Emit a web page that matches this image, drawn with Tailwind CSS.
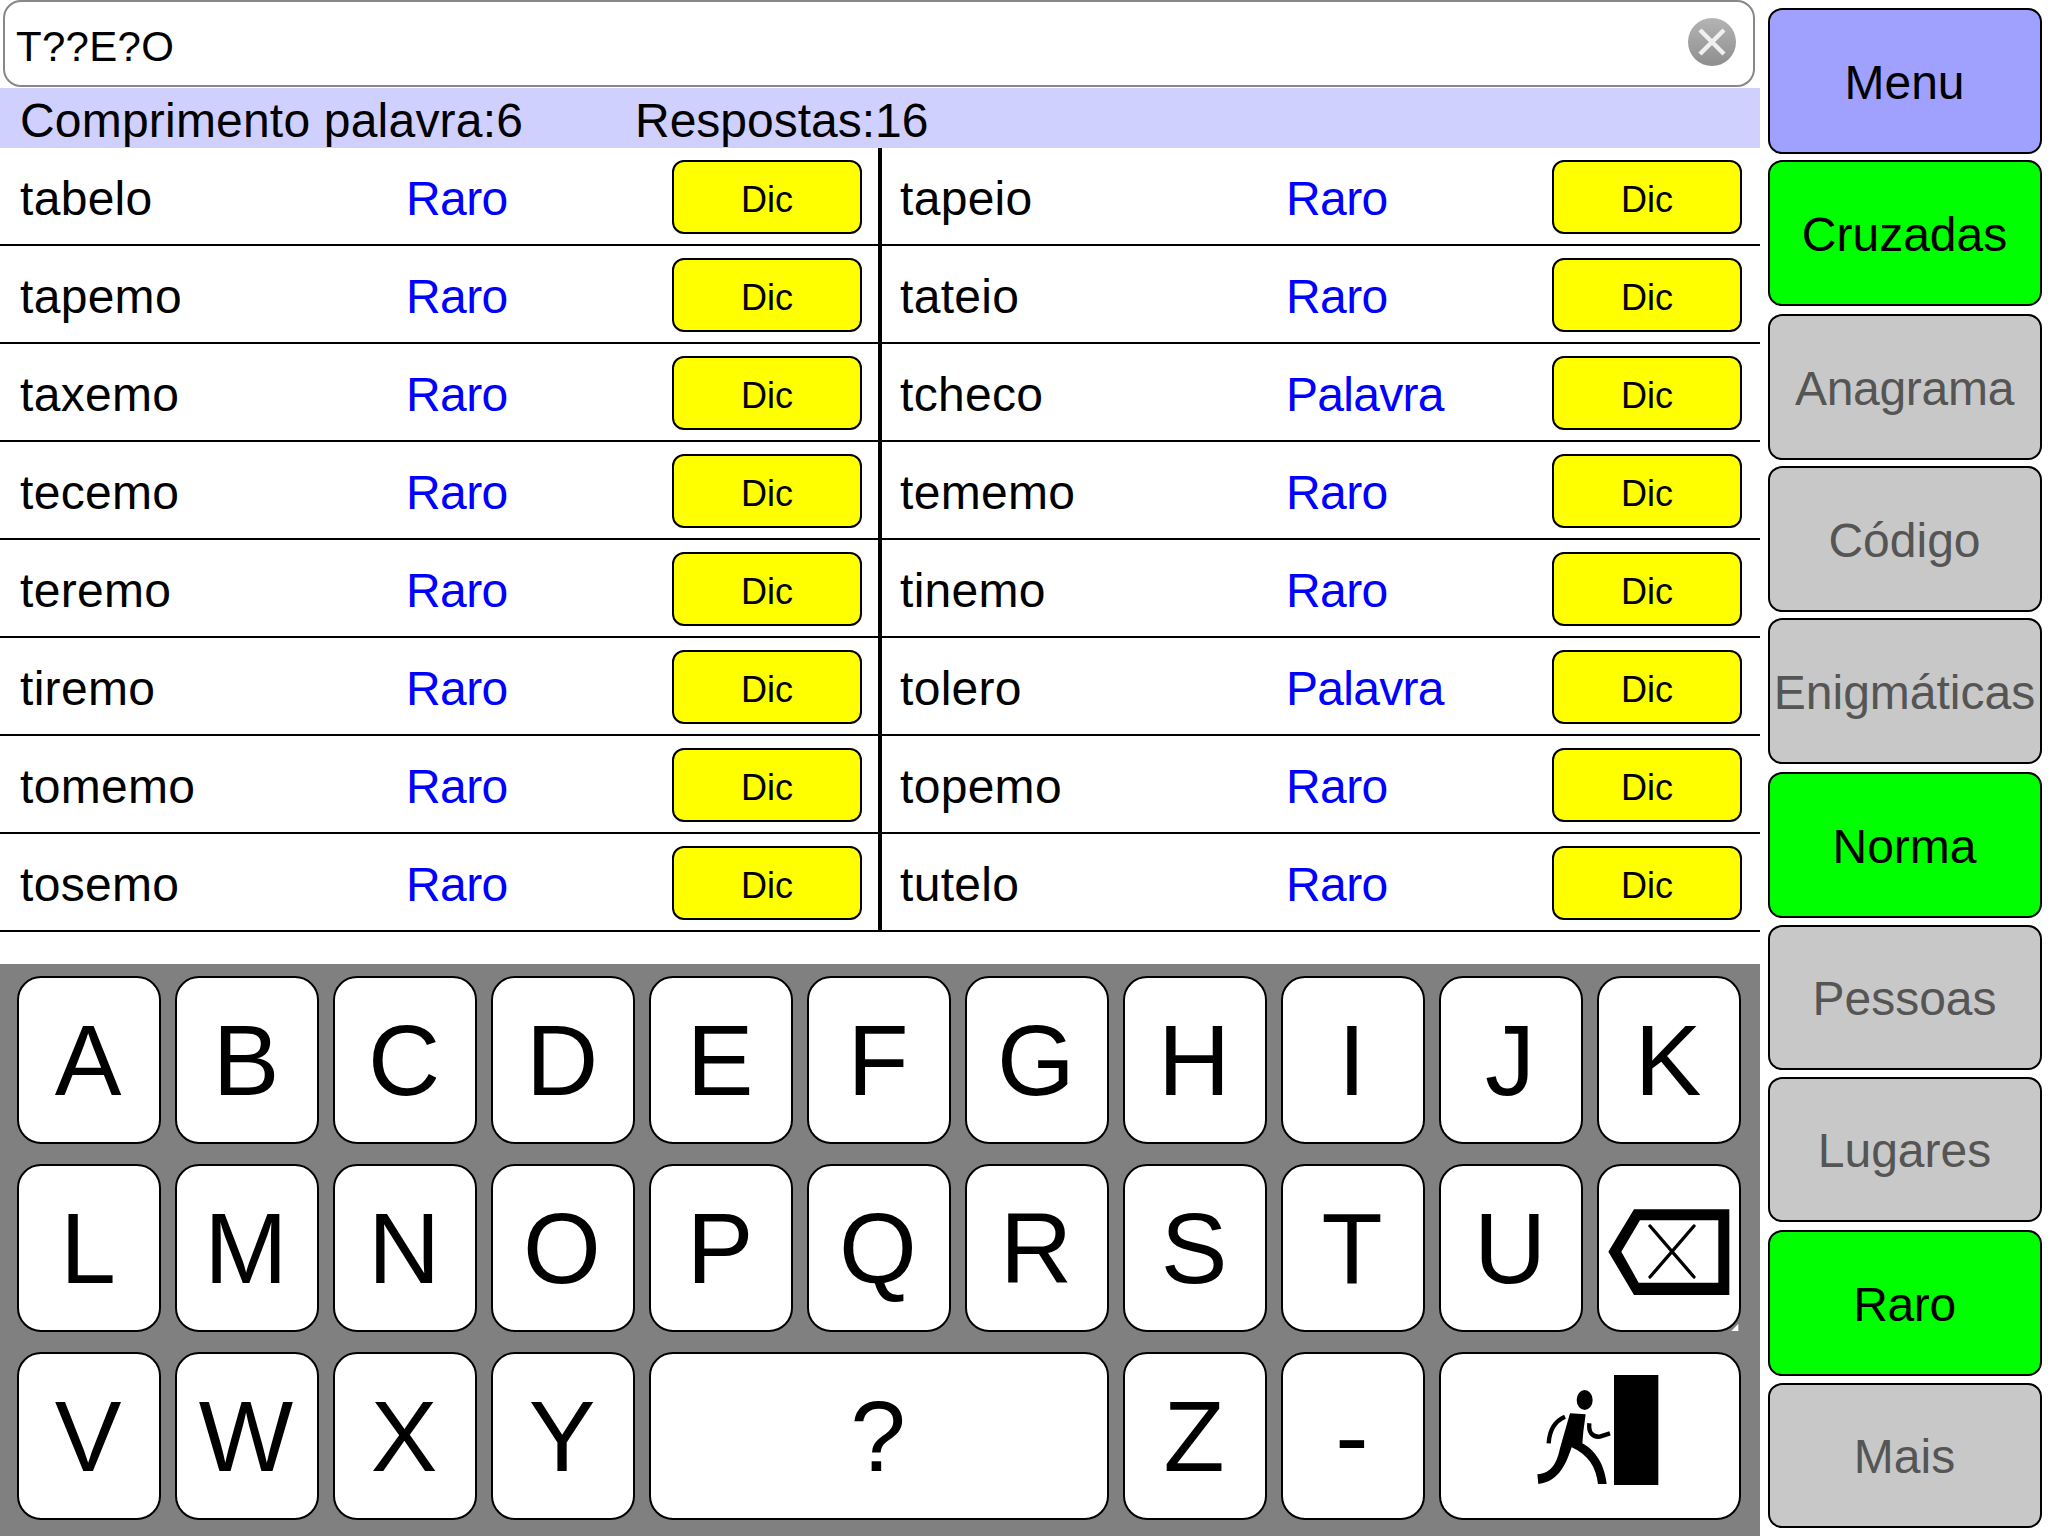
<!DOCTYPE html>
<html lang="pt">
<head>
<meta charset="utf-8">
<title>Cruzadas</title>
<script src="https://cdn.jsdelivr.net/npm/@tailwindcss/browser@4"></script>
</head>
<body class="bg-white">
<div class="w-[2048px] h-[1536px] flex overflow-hidden bg-white text-black font-['Liberation_Sans',Arial,sans-serif]">
  <div class="w-[1760px] flex flex-col">
    <div class="h-[88px] pl-[3px] pr-[5px]">
      <div class="h-[87px] border-2 border-[#888888] rounded-[18px] pl-[11px] pr-[16px] flex items-center justify-between bg-white">
        <span class="text-[42px] leading-none pt-[7px] tracking-[0.3px]">T??E?O</span>
        <svg width="50" height="50" viewBox="0 0 50 50" class="mt-[-3px]">
          <defs>
            <linearGradient id="cg" x1="0" y1="0" x2="0" y2="1"><stop offset="0" stop-color="#b4b4b4"/><stop offset="1" stop-color="#8e8e8e"/></linearGradient>
            <filter id="soft"><feGaussianBlur stdDeviation="0.7"/></filter>
          </defs>
          <g filter="url(#soft)">
            <circle cx="25" cy="25" r="24" fill="url(#cg)"/>
            <path d="M13 13 L37 37 M37 13 L13 37" stroke="#f0f0f0" stroke-width="4.5" fill="none"/>
          </g>
        </svg>
      </div>
    </div>
    <div class="h-[60px] bg-[#d0d0ff] pl-[20px] flex items-center text-[48px] leading-none">
      <span class="w-[615px] pt-[6px] tracking-[0.2px]">Comprimento palavra:6</span>
      <span class="pt-[6px]">Respostas:16</span>
    </div>
    <div class="h-[784px] flex">
      <div class="w-[878px] flex flex-col">
        <div class="h-[98px] border-b-2 border-black pl-[20px] flex items-center text-[48px]"><span class="w-[386px] pt-[6px] tracking-[0.3px]">tabelo</span><span class="w-[266px] pt-[6px] tracking-[-0.6px] text-[#0000ff]">Raro</span><div class="mt-[2px] pt-[5px] w-[190px] h-[74px] bg-[#ffff00] border-2 border-black rounded-[12px] flex items-center justify-center text-[36px]">Dic</div></div>
        <div class="h-[98px] border-b-2 border-black pl-[20px] flex items-center text-[48px]"><span class="w-[386px] pt-[6px] tracking-[0.3px]">tapemo</span><span class="w-[266px] pt-[6px] tracking-[-0.6px] text-[#0000ff]">Raro</span><div class="mt-[2px] pt-[5px] w-[190px] h-[74px] bg-[#ffff00] border-2 border-black rounded-[12px] flex items-center justify-center text-[36px]">Dic</div></div>
        <div class="h-[98px] border-b-2 border-black pl-[20px] flex items-center text-[48px]"><span class="w-[386px] pt-[6px] tracking-[0.3px]">taxemo</span><span class="w-[266px] pt-[6px] tracking-[-0.6px] text-[#0000ff]">Raro</span><div class="mt-[2px] pt-[5px] w-[190px] h-[74px] bg-[#ffff00] border-2 border-black rounded-[12px] flex items-center justify-center text-[36px]">Dic</div></div>
        <div class="h-[98px] border-b-2 border-black pl-[20px] flex items-center text-[48px]"><span class="w-[386px] pt-[6px] tracking-[0.3px]">tecemo</span><span class="w-[266px] pt-[6px] tracking-[-0.6px] text-[#0000ff]">Raro</span><div class="mt-[2px] pt-[5px] w-[190px] h-[74px] bg-[#ffff00] border-2 border-black rounded-[12px] flex items-center justify-center text-[36px]">Dic</div></div>
        <div class="h-[98px] border-b-2 border-black pl-[20px] flex items-center text-[48px]"><span class="w-[386px] pt-[6px] tracking-[0.3px]">teremo</span><span class="w-[266px] pt-[6px] tracking-[-0.6px] text-[#0000ff]">Raro</span><div class="mt-[2px] pt-[5px] w-[190px] h-[74px] bg-[#ffff00] border-2 border-black rounded-[12px] flex items-center justify-center text-[36px]">Dic</div></div>
        <div class="h-[98px] border-b-2 border-black pl-[20px] flex items-center text-[48px]"><span class="w-[386px] pt-[6px] tracking-[0.3px]">tiremo</span><span class="w-[266px] pt-[6px] tracking-[-0.6px] text-[#0000ff]">Raro</span><div class="mt-[2px] pt-[5px] w-[190px] h-[74px] bg-[#ffff00] border-2 border-black rounded-[12px] flex items-center justify-center text-[36px]">Dic</div></div>
        <div class="h-[98px] border-b-2 border-black pl-[20px] flex items-center text-[48px]"><span class="w-[386px] pt-[6px] tracking-[0.3px]">tomemo</span><span class="w-[266px] pt-[6px] tracking-[-0.6px] text-[#0000ff]">Raro</span><div class="mt-[2px] pt-[5px] w-[190px] h-[74px] bg-[#ffff00] border-2 border-black rounded-[12px] flex items-center justify-center text-[36px]">Dic</div></div>
        <div class="h-[98px] border-b-2 border-black pl-[20px] flex items-center text-[48px]"><span class="w-[386px] pt-[6px] tracking-[0.3px]">tosemo</span><span class="w-[266px] pt-[6px] tracking-[-0.6px] text-[#0000ff]">Raro</span><div class="mt-[2px] pt-[5px] w-[190px] h-[74px] bg-[#ffff00] border-2 border-black rounded-[12px] flex items-center justify-center text-[36px]">Dic</div></div>
      </div>
      <div class="w-[4px] bg-black"></div>
      <div class="w-[878px] flex flex-col">
        <div class="h-[98px] border-b-2 border-black pl-[18px] flex items-center text-[48px]"><span class="w-[386px] pt-[6px] tracking-[0.3px]">tapeio</span><span class="w-[266px] pt-[6px] tracking-[-0.6px] text-[#0000ff]">Raro</span><div class="mt-[2px] pt-[5px] w-[190px] h-[74px] bg-[#ffff00] border-2 border-black rounded-[12px] flex items-center justify-center text-[36px]">Dic</div></div>
        <div class="h-[98px] border-b-2 border-black pl-[18px] flex items-center text-[48px]"><span class="w-[386px] pt-[6px] tracking-[0.3px]">tateio</span><span class="w-[266px] pt-[6px] tracking-[-0.6px] text-[#0000ff]">Raro</span><div class="mt-[2px] pt-[5px] w-[190px] h-[74px] bg-[#ffff00] border-2 border-black rounded-[12px] flex items-center justify-center text-[36px]">Dic</div></div>
        <div class="h-[98px] border-b-2 border-black pl-[18px] flex items-center text-[48px]"><span class="w-[386px] pt-[6px] tracking-[0.3px]">tcheco</span><span class="w-[266px] pt-[6px] tracking-[-0.7px] text-[#0000ff]">Palavra</span><div class="mt-[2px] pt-[5px] w-[190px] h-[74px] bg-[#ffff00] border-2 border-black rounded-[12px] flex items-center justify-center text-[36px]">Dic</div></div>
        <div class="h-[98px] border-b-2 border-black pl-[18px] flex items-center text-[48px]"><span class="w-[386px] pt-[6px] tracking-[0.3px]">tememo</span><span class="w-[266px] pt-[6px] tracking-[-0.6px] text-[#0000ff]">Raro</span><div class="mt-[2px] pt-[5px] w-[190px] h-[74px] bg-[#ffff00] border-2 border-black rounded-[12px] flex items-center justify-center text-[36px]">Dic</div></div>
        <div class="h-[98px] border-b-2 border-black pl-[18px] flex items-center text-[48px]"><span class="w-[386px] pt-[6px] tracking-[0.3px]">tinemo</span><span class="w-[266px] pt-[6px] tracking-[-0.6px] text-[#0000ff]">Raro</span><div class="mt-[2px] pt-[5px] w-[190px] h-[74px] bg-[#ffff00] border-2 border-black rounded-[12px] flex items-center justify-center text-[36px]">Dic</div></div>
        <div class="h-[98px] border-b-2 border-black pl-[18px] flex items-center text-[48px]"><span class="w-[386px] pt-[6px] tracking-[0.3px]">tolero</span><span class="w-[266px] pt-[6px] tracking-[-0.7px] text-[#0000ff]">Palavra</span><div class="mt-[2px] pt-[5px] w-[190px] h-[74px] bg-[#ffff00] border-2 border-black rounded-[12px] flex items-center justify-center text-[36px]">Dic</div></div>
        <div class="h-[98px] border-b-2 border-black pl-[18px] flex items-center text-[48px]"><span class="w-[386px] pt-[6px] tracking-[0.3px]">topemo</span><span class="w-[266px] pt-[6px] tracking-[-0.6px] text-[#0000ff]">Raro</span><div class="mt-[2px] pt-[5px] w-[190px] h-[74px] bg-[#ffff00] border-2 border-black rounded-[12px] flex items-center justify-center text-[36px]">Dic</div></div>
        <div class="h-[98px] border-b-2 border-black pl-[18px] flex items-center text-[48px]"><span class="w-[386px] pt-[6px] tracking-[0.3px]">tutelo</span><span class="w-[266px] pt-[6px] tracking-[-0.6px] text-[#0000ff]">Raro</span><div class="mt-[2px] pt-[5px] w-[190px] h-[74px] bg-[#ffff00] border-2 border-black rounded-[12px] flex items-center justify-center text-[36px]">Dic</div></div>
      </div>
    </div>
    <div class="h-[32px]"></div>
    <div class="h-[572px] bg-[#808080] pl-[17px] pt-[12px]">
      <div class="grid grid-cols-[repeat(11,144px)] auto-rows-[168px] gap-x-[14px] gap-y-[20px] text-[100px] leading-none *:pr-[2px]">
        <div class="bg-white border-2 border-black rounded-[24px] flex items-center justify-center">A</div>
        <div class="bg-white border-2 border-black rounded-[24px] flex items-center justify-center">B</div>
        <div class="bg-white border-2 border-black rounded-[24px] flex items-center justify-center">C</div>
        <div class="bg-white border-2 border-black rounded-[24px] flex items-center justify-center">D</div>
        <div class="bg-white border-2 border-black rounded-[24px] flex items-center justify-center">E</div>
        <div class="bg-white border-2 border-black rounded-[24px] flex items-center justify-center">F</div>
        <div class="bg-white border-2 border-black rounded-[24px] flex items-center justify-center">G</div>
        <div class="bg-white border-2 border-black rounded-[24px] flex items-center justify-center">H</div>
        <div class="bg-white border-2 border-black rounded-[24px] flex items-center justify-center">I</div>
        <div class="bg-white border-2 border-black rounded-[24px] flex items-center justify-center">J</div>
        <div class="bg-white border-2 border-black rounded-[24px] flex items-center justify-center">K</div>
        <div class="bg-white border-2 border-black rounded-[24px] flex items-center justify-center">L</div>
        <div class="bg-white border-2 border-black rounded-[24px] flex items-center justify-center">M</div>
        <div class="bg-white border-2 border-black rounded-[24px] flex items-center justify-center">N</div>
        <div class="bg-white border-2 border-black rounded-[24px] flex items-center justify-center">O</div>
        <div class="bg-white border-2 border-black rounded-[24px] flex items-center justify-center">P</div>
        <div class="bg-white border-2 border-black rounded-[24px] flex items-center justify-center">Q</div>
        <div class="bg-white border-2 border-black rounded-[24px] flex items-center justify-center">R</div>
        <div class="bg-white border-2 border-black rounded-[24px] flex items-center justify-center">S</div>
        <div class="bg-white border-2 border-black rounded-[24px] flex items-center justify-center">T</div>
        <div class="bg-white border-2 border-black rounded-[24px] flex items-center justify-center">U</div>
        <div class="relative bg-white border-2 border-black rounded-[24px]">
          <svg width="170" height="180" viewBox="0 0 510 540" class="absolute left-[-9px] top-[-5px] max-w-none">
            <polygon points="445,510 445,488 424,510" fill="#ffffff"/>
            <path fill-rule="evenodd" d="M132 145 L418 145 L418 402 L132 402 L55 272 Z M150 178 L94 272 L146 365 L385 365 L385 178 Z" fill="#000"/>
            <path d="M180 195 L312 348 M312 195 L180 348" stroke="#000" stroke-width="10" stroke-linecap="round" fill="none"/>
          </svg>
        </div>
        <div class="bg-white border-2 border-black rounded-[24px] flex items-center justify-center">V</div>
        <div class="bg-white border-2 border-black rounded-[24px] flex items-center justify-center">W</div>
        <div class="bg-white border-2 border-black rounded-[24px] flex items-center justify-center">X</div>
        <div class="bg-white border-2 border-black rounded-[24px] flex items-center justify-center">Y</div>
        <div class="col-span-3 bg-white border-2 border-black rounded-[24px] flex items-center justify-center">?</div>
        <div class="bg-white border-2 border-black rounded-[24px] flex items-center justify-center">Z</div>
        <div class="bg-white border-2 border-black rounded-[24px] flex items-center justify-center">-</div>
        <div class="col-span-2 relative bg-white border-2 border-black rounded-[24px]">
          <svg width="160" height="140" viewBox="0 0 480 420" class="absolute left-[79px] top-[6px] max-w-none">
            <rect x="282" y="45" width="133" height="330" fill="#000"/>
            <ellipse cx="194" cy="120" rx="24" ry="30" fill="#000"/>
            <path d="M150 160 L197 163 L190 215 L187 250 C215 265 252 300 260 372 L234 372 C228 320 205 285 155 262 C140 305 120 365 55 372 L52 343 C95 340 110 310 120 265 C130 230 140 195 150 160 Z" fill="#000"/>
            <path d="M86 250 C88 215 100 185 135 170" stroke="#000" stroke-width="13" fill="none"/>
            <path d="M208 190 C205 215 215 232 240 230 L270 220" stroke="#000" stroke-width="13" fill="none"/>
          </svg>
        </div>
      </div>
    </div>
  </div>
  <div class="w-[274px] ml-[8px] flex flex-col text-[48px] leading-none *:pt-[3px] *:pr-[1px]">
    <div class="mt-[8px] h-[146px] bg-[#a0a0ff] border-2 border-black rounded-[14px] flex items-center justify-center">Menu</div>
    <div class="mt-[6px] h-[146px] bg-[#00ff00] border-2 border-black rounded-[14px] flex items-center justify-center">Cruzadas</div>
    <div class="mt-[8px] h-[146px] bg-[#c8c8c8] text-[#555555] border-2 border-black rounded-[14px] flex items-center justify-center tracking-[-0.3px]">Anagrama</div>
    <div class="mt-[6px] h-[146px] bg-[#c8c8c8] text-[#555555] border-2 border-black rounded-[14px] flex items-center justify-center">Código</div>
    <div class="mt-[6px] h-[146px] bg-[#c8c8c8] text-[#555555] border-2 border-black rounded-[14px] flex items-center justify-center">Enigmáticas</div>
    <div class="mt-[8px] h-[146px] bg-[#00ff00] border-2 border-black rounded-[14px] flex items-center justify-center">Norma</div>
    <div class="mt-[7px] h-[145px] bg-[#c8c8c8] text-[#555555] border-2 border-black rounded-[14px] flex items-center justify-center">Pessoas</div>
    <div class="mt-[7px] h-[145px] bg-[#c8c8c8] text-[#555555] border-2 border-black rounded-[14px] flex items-center justify-center">Lugares</div>
    <div class="mt-[8px] h-[146px] bg-[#00ff00] border-2 border-black rounded-[14px] flex items-center justify-center tracking-[-0.4px]">Raro</div>
    <div class="mt-[7px] h-[145px] bg-[#c8c8c8] text-[#555555] border-2 border-black rounded-[14px] flex items-center justify-center">Mais</div>
  </div>
</div>
</body>
</html>
